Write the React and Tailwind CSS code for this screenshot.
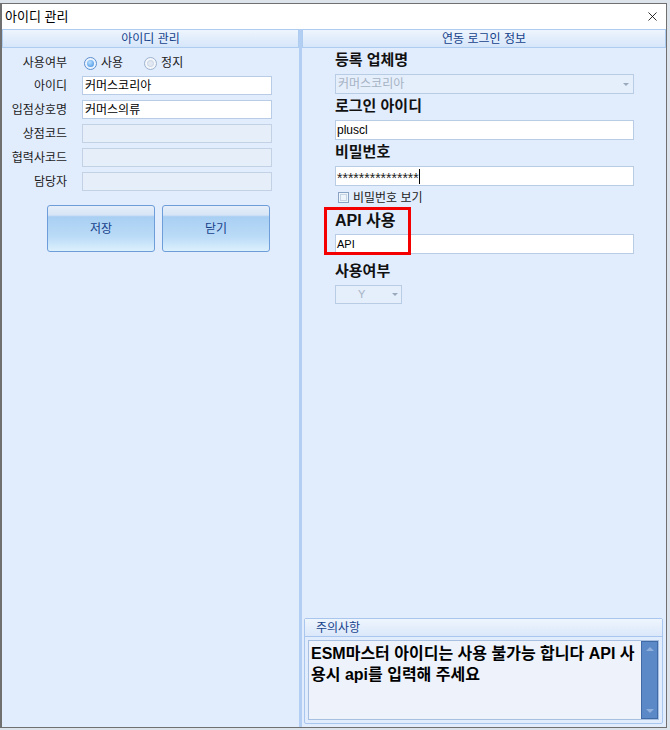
import { X } from "lucide-react";

const font = { fontFamily: '"Liberation Sans", "Noto Sans CJK KR", sans-serif' };

function Radio({ checked, label }) {
    return (
        <label className="flex items-center gap-[4px]">
            <span
                className={`w-[13px] h-[13px] rounded-full border flex items-center justify-center ${
                    checked ? "border-[#5b8fcf] bg-[#eaf3fd]" : "border-[#9db3cf] bg-[#f3f6fa]"
                }`}
            >
                {checked && <span className="w-[7px] h-[7px] rounded-full bg-[radial-gradient(circle_at_40%_35%,#b9e0ff,#3a8ae0)]" />}
                {!checked && <span className="w-[7px] h-[7px] rounded-full bg-[#e1e8f1] border border-[#c9d5e4]" />}
            </span>
            <span className="text-[12px] text-[#1b1b1b]">{label}</span>
        </label>
    );
}

function Field({ label, value, disabled }) {
    return (
        <div className="flex items-center h-[19px]">
            <span className="w-[65px] text-right text-[12px] text-[#1b1b1b]">{label}</span>
            <div
                className={`ml-[15px] w-[190px] h-[19px] border flex items-center px-[2px] text-[12px] ${
                    disabled ? "bg-[#e6eef9] border-[#c3d1e4]" : "bg-white border-[#b9cce6]"
                }`}
            >
                {value}
            </div>
        </div>
    );
}

function Btn({ children }) {
    return (
        <button className="w-[108px] h-[47px] rounded-[3px] border border-[#6e9ed9] text-[12px] text-[#15428b] bg-[linear-gradient(180deg,#e6eef9_0%,#d7e5f6_20%,#a8cff3_24%,#bcdcf7_70%,#dcf0fd_100%)]">
            {children}
        </button>
    );
}

function Header({ children }) {
    return (
        <div className="h-[19px] border border-[#aecbf0] flex items-center justify-center text-[12px] text-[#15428b] bg-[linear-gradient(180deg,#eef5fd,#d6e6fa)]">
            {children}
        </div>
    );
}

export default function App() {
    return (
        <div className="w-[670px] h-[730px] bg-[#dde3ea] overflow-hidden" style={font}>
            <div className="mt-[3px] w-[667px] h-[725px] border-l-2 border-t border-r border-b border-[#707070] bg-white flex flex-col">
                <div className="h-[25px] flex items-center justify-between pl-[3px] pr-[6px] bg-white">
                    <span className="text-[13px] text-black">아이디 관리</span>
                    <X size={15} strokeWidth={1.3} className="text-black" />
                </div>
                <div className="flex-1 flex bg-[#e1ecfd]">
                    {/* left panel */}
                    <div className="w-[297px] flex flex-col">
                        <Header>아이디 관리</Header>
                        <div className="pt-[4px] flex flex-col">
                            <div className="flex items-center h-[22px]">
                                <span className="w-[65px] text-right text-[12px] text-[#1b1b1b]">사용여부</span>
                                <div className="ml-[17px] flex gap-[21px]">
                                    <Radio checked label="사용" />
                                    <Radio label="정지" />
                                </div>
                            </div>
                            <div className="mt-[2px] flex flex-col gap-[5px]">
                                <Field label="아이디" value="커머스코리아" />
                                <Field label="입점상호명" value="커머스의류" />
                                <Field label="상점코드" disabled />
                                <Field label="협력사코드" disabled />
                                <Field label="담당자" disabled />
                            </div>
                            <div className="mt-[14px] ml-[45px] flex gap-[7px]">
                                <Btn>저장</Btn>
                                <Btn>닫기</Btn>
                            </div>
                        </div>
                    </div>
                    {/* splitter */}
                    <div className="w-[3px] bg-[#b2cef2]" />
                    {/* right panel */}
                    <div className="flex-1 flex flex-col">
                        <Header>연동 로그인 정보</Header>
                        <div className="pl-[33px] pr-[32px] pt-[2px] flex flex-col">
                            <div className="text-[15px] font-bold text-[#111] leading-[20px]">등록 업체명</div>
                            <div className="mt-[4px] h-[20px] border border-[#b9cce6] bg-[#e5eefb] flex items-center justify-between px-[2px]">
                                <span className="text-[12px] text-[#a6b3c4]">커머스코리아</span>
                                <span className="w-0 h-0 border-l-[3px] border-r-[3px] border-t-[3px] border-l-transparent border-r-transparent border-t-[#9aa9bc] mr-[2px]" />
                            </div>
                            <div className="mt-[2px] text-[15px] font-bold text-[#111] leading-[20px]">로그인 아이디</div>
                            <div className="mt-[4px] h-[20px] border border-[#b9cce6] bg-white flex items-center px-[1px] text-[12px] text-black">pluscl</div>
                            <div className="mt-[2px] text-[15px] font-bold text-[#111] leading-[20px]">비밀번호</div>
                            <div className="mt-[4px] h-[20px] border border-[#b9cce6] bg-white flex items-center px-[1px] text-[14px] text-[#222]">
                                <span className="leading-[14px] pt-[3px]">***************</span>
                                <span className="w-[1px] h-[15px] bg-black" />
                            </div>
                            <div className="mt-[6px] ml-[3px] flex items-center gap-[4px] h-[11px]">
                                <span className="w-[11px] h-[11px] border border-[#8aa3c4] bg-[#eef4fb] flex items-center justify-center">
                                    <span className="w-[7px] h-[7px] border border-[#c5d3e4]" />
                                </span>
                                <span className="text-[12px] text-[#1b1b1b]">비밀번호 보기</span>
                            </div>
                            <div className="mt-[4px] -ml-[11px] w-[87px] h-[48px] border-[3px] border-[#f40000] relative">
                                <div className="absolute left-[8px] top-[1px] text-[16px] font-bold text-[#111] leading-[20px] whitespace-nowrap">API 사용</div>
                            </div>
                            <div className="-mt-[21px] h-[20px] border border-[#b9cce6] bg-white flex items-center px-[1px] text-[11px] text-black">API</div>
                            <div className="mt-[7px] text-[15px] font-bold text-[#111] leading-[20px]">사용여부</div>
                            <div className="mt-[4px] w-[67px] h-[19px] border border-[#b9cce6] bg-[#e5eefb] flex items-center justify-between pl-[22px] pr-[3px]">
                                <span className="text-[11px] text-[#a6b3c4]">Y</span>
                                <span className="w-0 h-0 border-l-[3px] border-r-[3px] border-t-[3px] border-l-transparent border-r-transparent border-t-[#9aa9bc]" />
                            </div>
                        </div>
                        <div className="flex-1" />
                        <div className="ml-[2px] mr-[3px] mb-[3px] h-[106px] border border-[#a9c7ee] rounded-[2px] flex flex-col">
                            <div className="h-[18px] border-b border-[#a9c7ee] bg-[linear-gradient(180deg,#eef5fd,#dbe8fa)] flex items-center pl-[11px] text-[12px] text-[#15428b]">
                                주의사항
                            </div>
                            <div className="flex-1 m-[3px] border border-[#a7c0e2] bg-[#eef3fb] flex">
                                <div className="flex-1 px-[2px] pt-[2px] text-[16px] font-bold text-black leading-[21px]">
                                    ESM마스터 아이디는 사용 불가능 합니다 API 사용시 api를 입력해 주세요
                                </div>
                                <div className="w-[17px] bg-[#5b88c7] border border-[#3f6aa6] flex flex-col justify-between items-center py-[5px]">
                                    <span className="w-0 h-0 border-l-[4px] border-r-[4px] border-b-[4px] border-l-transparent border-r-transparent border-b-[#8fb0dc]" />
                                    <span className="w-0 h-0 border-l-[4px] border-r-[4px] border-t-[4px] border-l-transparent border-r-transparent border-t-[#8fb0dc]" />
                                </div>
                            </div>
                        </div>
                    </div>
                </div>
            </div>
        </div>
    );
}
